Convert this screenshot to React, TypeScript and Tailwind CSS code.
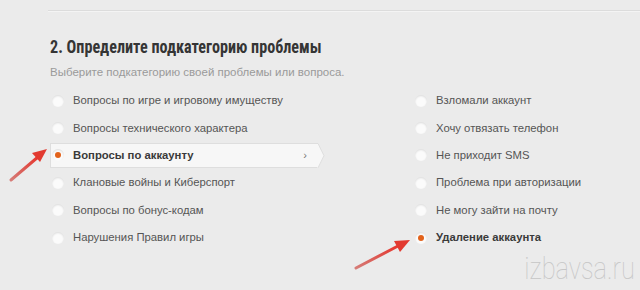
import React from "react";

const left = [
  "Вопросы по игре и игровому имуществу",
  "Вопросы технического характера",
  "Вопросы по аккаунту",
  "Клановые войны и Киберспорт",
  "Вопросы по бонус-кодам",
  "Нарушения Правил игры",
];
const right = [
  "Взломали аккаунт",
  "Хочу отвязать телефон",
  "Не приходит SMS",
  "Проблема при авторизации",
  "Не могу зайти на почту",
  "Удаление аккаунта",
];

function Radio({ on }: { on: boolean }) {
  return (
    <span className="w-[12px] h-[12px] rounded-full bg-[#fbfbfb] shadow-[inset_0_1px_2px_rgba(0,0,0,0.12)] flex items-center justify-center shrink-0">
      {on && <span className="w-[6px] h-[6px] rounded-full bg-[#e2621b]" />}
    </span>
  );
}

function Row({ text, on, boxed }: { text: string; on: boolean; boxed?: boolean }) {
  if (boxed) {
    return (
      <div className="h-[27.4px] flex items-center relative">
        <div className="absolute left-0 top-[1px] bottom-[1px] w-[268px] bg-[#f7f7f7] border border-[#dedede] border-r-0" />
        <svg className="absolute left-[267px] top-[1px]" width="8" height="25.4" viewBox="0 0 8 25.4">
          <path d="M0 0.5 L1 0.5 L7 12.7 L1 24.9 L0 24.9 Z" fill="#f7f7f7" stroke="#dedede" strokeWidth="1" />
          <rect x="0" y="1" width="1" height="23.4" fill="#f7f7f7" />
        </svg>
        <div className="relative flex items-center w-[268px] pl-[2px]">
          <Radio on={on} />
          <span className="ml-[9px] text-[11.3px] font-bold text-[#3a3a3a]">{text}</span>
          <span className="ml-auto mr-[11px] text-[11px] text-[#777]">›</span>
        </div>
      </div>
    );
  }
  return (
    <div className="h-[27.4px] flex items-center pl-[2px]">
      <Radio on={on} />
      <span className={on ? "ml-[9px] text-[11.3px] font-bold text-[#3a3a3a]" : "ml-[9px] text-[11.3px] text-[#555]"}>{text}</span>
    </div>
  );
}

export default function App() {
  return (
    <div
      className="w-[640px] h-[290px] bg-[#ebebeb] relative overflow-hidden"
      style={{ fontFamily: '"Liberation Sans", Arial, sans-serif' }}
    >
      <div className="ml-[48px] mt-[10px] h-[2px] border-t border-[#dcdcdc] bg-[#f4f4f4]" />
      <div className="pl-[50px] pt-[23px]">
        <h2
          className="text-[19px] leading-[24px] font-bold text-[#353535] scale-x-[0.85] origin-left whitespace-nowrap"
          style={{ fontFamily: '"Liberation Sans Narrow", "Roboto Condensed", "Liberation Sans", sans-serif' }}
        >
          2. Определите подкатегорию проблемы
        </h2>
        <p className="mt-[6px] text-[11.5px] leading-[14px] text-[#9a9a9a]">
          Выберите подкатегорию своей проблемы или вопроса.
        </p>
        <div className="mt-[8px] flex">
          <div className="w-[363px]">
            {left.map((t, i) => (
              <Row key={t} text={t} on={i === 2} boxed={i === 2} />
            ))}
          </div>
          <div>
            {right.map((t, i) => (
              <Row key={t} text={t} on={i === 5} />
            ))}
          </div>
        </div>
      </div>

      <svg className="absolute left-0 top-0 pointer-events-none" width="640" height="290">
        <defs>
          <linearGradient id="ar" x1="0" y1="1" x2="1" y2="0">
            <stop offset="0" stopColor="#c9322a" stopOpacity="0.6" />
            <stop offset="1" stopColor="#e8362e" />
          </linearGradient>
        </defs>
        <g>
          <line x1="11" y1="180" x2="38" y2="157" stroke="url(#ar)" strokeWidth="3" strokeLinecap="round" />
          <polygon points="47,149 32,153 40,162" fill="#e23a30" />
        </g>
        <g>
          <line x1="356" y1="268" x2="398" y2="246" stroke="url(#ar)" strokeWidth="3" strokeLinecap="round" />
          <polygon points="410,240 394,241 400,252" fill="#e23a30" />
        </g>
      </svg>

      <div
        className="absolute right-[5px] bottom-[3px] text-[31px] leading-[36px] text-[#c6c6c6] font-thin scale-x-[0.82] origin-right"
        style={{ fontFamily: 'Roboto, sans-serif' }}
      >
        izbavsa.ru
      </div>
    </div>
  );
}
